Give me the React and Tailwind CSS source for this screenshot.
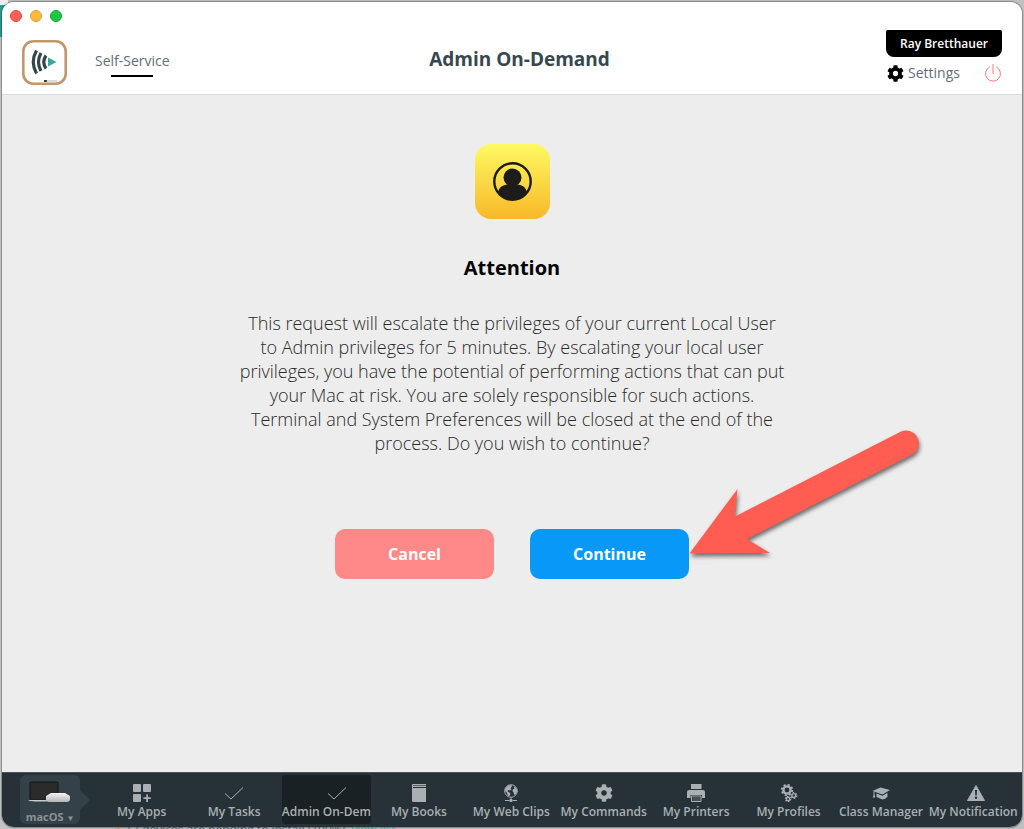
import {useState} from "react";
import {FaCog} from "react-icons/fa";

const AppsIcon = () => (
    <svg width="18" height="18" viewBox="0 0 18 18" fill="currentColor">
        <rect x="0" y="0" width="8" height="8" rx="1"/>
        <rect x="10" y="0" width="8" height="8" rx="1"/>
        <rect x="0" y="10" width="8" height="8" rx="1"/>
        <path d="M13.2 10.5h1.8v2.8h2.8v1.8H15v2.8h-1.8v-2.8h-2.8v-1.8h2.8z"/>
    </svg>
);

const CheckIcon = () => (
    <svg width="18" height="18" viewBox="0 0 18 18" fill="none" stroke="currentColor" strokeWidth="1">
        <path d="M0 9.500L6 15L18 3.500"/>
    </svg>
);

const BookIcon = () => (
    <svg width="16" height="18" viewBox="0 0 16 18" fill="currentColor">
        <path d="M1.500 0H15v1H2v1h13v1H2v1h13v14H2.500Q1 18 1 16.500V1.500Q1 .3 1.500 0z"/>
        <path d="M2 1h13v1H2z" opacity="0.4"/>
    </svg>
);

const GlobeIcon = () => (
    <svg width="16" height="18" viewBox="0 0 16 18" fill="none" stroke="currentColor">
        <circle cx="8" cy="7" r="6.300" strokeWidth="1"/>
        <path d="M2.200 4.500L5 1.500L8.500 1L9 2.500L7.500 4L8.500 5.500L6.500 6.500L5 6L4.500 7.500L6.500 8.500L7.500 10L6 12.800L4.500 11L4 8.800L2 7z" fill="currentColor" stroke="none"/>
        <path d="M10.500 2L13.500 4.200L14.300 7.500L12.500 10.500L11 10.800L10.600 8.500L9.500 7L10 5.200L11.500 4.500z" fill="currentColor" stroke="none"/>
        <path d="M8 13.500v2M2 16.500h4.500M9.500 16.500H14" strokeWidth="1"/>
        <rect x="6.500" y="15" width="3" height="3" rx="1" fill="currentColor" stroke="none"/>
    </svg>
);

const PrinterIcon = () => (
    <svg width="18" height="18" viewBox="0 0 18 18" fill="currentColor">
        <path d="M4 0h10.500v5H4z"/>
        <path d="M2 6h14q2 0 2 2v6h-3v-3H3.500v3H0V8q0-2 2-2z"/>
        <path d="M4.500 12h9.500v5.500H4.500z" fill="none" stroke="currentColor"/>
        <path d="M5.500 13.500H13v1H5.500zM5.500 15.500H13v1H5.500z" opacity="0.5"/>
    </svg>
);

const GearsIcon = () => (
    <svg width="18" height="18" viewBox="0 0 18 18" fill="none" stroke="currentColor">
        <circle cx="7" cy="6" r="3.600" strokeWidth="2.400"/>
        <circle cx="7" cy="6" r="5.300" strokeWidth="1.800" strokeDasharray="2.080 2.080"/>
        <circle cx="13.800" cy="11.500" r="1.900" strokeWidth="1.400"/>
        <circle cx="13.800" cy="11.500" r="3" strokeWidth="1.200" strokeDasharray="1.570 1.570"/>
        <circle cx="8" cy="15" r="1.700" strokeWidth="1.400"/>
        <circle cx="8" cy="15" r="2.700" strokeWidth="1.200" strokeDasharray="1.410 1.410"/>
    </svg>
);

const GraduationIcon = () => (
    <svg width="18" height="18" viewBox="0 0 18 18" fill="currentColor">
        <path d="M0.500 7L8.500 3.500L18 6L10.500 10.500z"/>
        <path d="M4.500 9.500L10.500 11.800L15.500 8.800v4q-2 2.500-5 2.700L4.500 13z"/>
        <path d="M1.500 7.500h1v3l.8 3H.8l.7-3z"/>
    </svg>
);

const WarningIcon = () => (
    <svg width="18" height="18" viewBox="0 0 18 18">
        <path d="M9 1.500L17.500 16.500H.500z" fill="currentColor" stroke="currentColor" strokeLinejoin="round"/>
        <path d="M7.900 6h2.200l-.4 5.500H8.300z" fill="#263238"/>
        <circle cx="9" cy="13.800" r="1.200" fill="#263238"/>
    </svg>
);

const PowerIcon = () => (
    <svg width="18" height="18" viewBox="0 0 18 18" fill="none" stroke="currentColor" strokeWidth="1" strokeLinecap="round">
        <path d="M9 0.500V9.500"/>
        <path d="M5.500 3A7.500 7.500 0 1 0 12.500 3"/>
    </svg>
);

const Logo = () => (
    <svg width="45" height="45" viewBox="0 0 45 45" fill="none">
        <rect x="1.300" y="1.300" width="42.400" height="42.400" rx="10" fill="#fff" stroke="#c1976b" strokeWidth="2.600"/>
        <g stroke="#33454e" strokeWidth="3.200">
            <path d="M14.500 10.500Q8 22 14.500 33.500"/>
            <path d="M19 13Q14 22 19 31"/>
            <path d="M24 15.500Q19.500 22 24 28.500"/>
        </g>
        <path d="M26 17.500L34.500 22L26 26.500z" fill="#35aa9b"/>
        <rect x="22" y="40" width="3" height="2" fill="#33454e"/>
        <rect x="25" y="40" width="10" height="2" fill="#dcdcdc"/>
    </svg>
);

const UserBadge = () => (
    <svg width="75" height="75" viewBox="0 0 75 75">
        <defs>
            <linearGradient id="badge" x1="0" y1="0" x2="0" y2="1">
                <stop offset="0" stopColor="#fefa62"/>
                <stop offset="1" stopColor="#f7b829"/>
            </linearGradient>
            <clipPath id="ring">
                <circle cx="37.500" cy="37.500" r="18.500"/>
            </clipPath>
        </defs>
        <rect width="75" height="75" rx="16" fill="url(#badge)"/>
        <circle cx="37.500" cy="37.500" r="18.200" fill="none" stroke="#1c1c1a" strokeWidth="2.400"/>
        <g fill="#1c1c1a" clipPath="url(#ring)">
            <circle cx="37.500" cy="33.500" r="9"/>
            <path d="M33 38h9v2.500c6 .5 9 3 10 8V56H23v-7.500c1-5 4-7.500 10-8z"/>
        </g>
    </svg>
);

const MacDevices = () => (
    <svg width="44" height="24" viewBox="0 0 44 24">
        <defs>
            <linearGradient id="mini" x1="0" y1="0" x2="0" y2="1">
                <stop offset="0" stopColor="#f4f4f4"/>
                <stop offset="1" stopColor="#b5b5b5"/>
            </linearGradient>
        </defs>
        <rect x="2" y="1" width="28" height="18" rx="1" fill="#2b2b2b" stroke="#151719"/>
        <path d="M0 19h22v1q-10 1-20 0z" fill="#c9cccd"/>
        <path d="M23 12h14l5 3v4q-1 2-3 2H21q-2 0-3-2v-4z" fill="url(#mini)"/>
    </svg>
);

const Arrow = () => (
    <svg width="250" height="150" viewBox="0 0 250 150" className="drop-shadow-[1px_3px_2px_rgba(0,0,0,0.55)]">
        <path
            d="M0.500 132.500L48.500 68L46 95.500L212 10.500A12.800 12.800 0 0 1 224 33L58 118L81 132z"
            fill="#ff5d52"
        />
    </svg>
);

const tabs = [
    {name: "My Apps", icon: <AppsIcon/>},
    {name: "My Tasks", icon: <CheckIcon/>},
    {name: "Admin On-Demand", icon: <CheckIcon/>},
    {name: "My Books", icon: <BookIcon/>},
    {name: "My Web Clips", icon: <GlobeIcon/>},
    {name: "My Commands", icon: <FaCog size={18}/>},
    {name: "My Printers", icon: <PrinterIcon/>},
    {name: "My Profiles", icon: <GearsIcon/>},
    {name: "Class Manager", icon: <GraduationIcon/>},
    {name: "My Notifications", icon: <WarningIcon/>},
];

const Header = () => (
    <header className="border-b border-[#dcdcdc] bg-white pb-[9px] pt-2">
        <div className="flex gap-2 px-2">
            <button aria-label="Close" className="h-3 w-3 rounded-full border border-[#e2463f] bg-[#fe5f57]"/>
            <button aria-label="Minimize" className="h-3 w-3 rounded-full border border-[#e1a032] bg-[#febb3e]"/>
            <button aria-label="Zoom" className="h-3 w-3 rounded-full border border-[#14a82e] bg-[#1ec840]"/>
        </div>
        <div className="flex items-start px-5 pt-2">
            <div className="flex w-[155px] items-start gap-7 pt-[10px]">
                <Logo/>
                <a href="#self-service" className="flex flex-col items-center gap-1 whitespace-nowrap pt-[11px] text-sm text-[#5f6d7c]">
                    Self-Service
                    <span className="h-[2px] w-[42px] bg-black"/>
                </a>
            </div>
            <h1 className="flex-1 pt-[15px] text-center text-[19px] leading-7 font-bold text-[#37474f]">Admin On-Demand</h1>
            <div className="flex w-[140px] flex-col items-end gap-[6px]">
                <div className="rounded-b-lg rounded-t-xs bg-black px-[14px] py-[6px] text-xs leading-[15px] font-semibold text-white">Ray Bretthauer</div>
                <div className="flex w-[115px] items-center justify-between">
                    <a href="#settings" className="flex items-center gap-1 text-sm text-[#5f6d7c]">
                        <FaCog size={17} className="text-black"/>
                        Settings
                    </a>
                    <button aria-label="Log out" className="text-[#fb7a7a]"><PowerIcon/></button>
                </div>
            </div>
        </div>
    </header>
);

const App = () => {
    const [active, setActive] = useState("Admin On-Demand");

    return <div className="flex h-screen flex-col overflow-hidden bg-[#bfc0c2] bg-[linear-gradient(#ececec_5px,#2f9c90_5px,#2f9c90_37px,#c4c4c6_37px)] bg-[length:8px_100%] bg-no-repeat px-[2px] pt-[2px] font-['Open_Sans',sans-serif]">
        <div className="flex flex-1 flex-col overflow-hidden rounded-xl bg-[#ededed] shadow-[0_0_1px_1px_rgba(0,0,0,0.3)]">
            <Header/>
            <main className="flex flex-1 flex-col items-center px-6 pt-[49px]">
                <UserBadge/>
                <h2 className="mt-[35px] text-xl font-bold text-black">Attention</h2>
                <p className="mt-[29px] max-w-[546px] text-center text-lg leading-6 font-light text-[#2a2a2a]">
                    This request will escalate the privileges of your current Local User to Admin privileges for 5
                    minutes. By escalating your local user privileges, you have the potential of performing actions
                    that can put your Mac at risk. You are solely responsible for such actions. Terminal and System
                    Preferences will be closed at the end of the process. Do you wish to continue?
                </p>
                <div className="mt-[74px] flex gap-9">
                    <button className="h-[50px] w-[159px] rounded-[10px] bg-[#ff8888] text-base font-bold text-white">Cancel</button>
                    <div className="relative">
                        <button className="h-[50px] w-[159px] rounded-[10px] bg-[#0898f8] text-base font-bold text-white">Continue</button>
                        <div className="pointer-events-none absolute bottom-2 left-full"><Arrow/></div>
                    </div>
                </div>
            </main>
            <nav className="flex h-[55px] border-t border-[#46545b] bg-[#263238] text-[#a9afb2]">
                <div className="relative ml-[18px] mr-[17px] mt-[2px] h-[49px] w-[60px] shrink-0 rounded-md bg-[#344149]">
                    <div className="absolute top-1/2 left-full -translate-y-1/2 border-y-[10px] border-l-[10px] border-y-transparent border-l-[#344149]"/>
                    <button className="flex w-full flex-col items-center gap-1 pt-[6px] text-[11px] leading-4 font-bold text-[#8b9397]">
                        <MacDevices/>
                        <span>macOS <span className="text-[8px]">▼</span></span>
                    </button>
                </div>
                <div className="flex min-w-0 flex-1 gap-[3px] pt-[2px] pr-1">
                    {tabs.map(tab => (
                        <button
                            key={tab.name}
                            onClick={() => setActive(tab.name)}
                            className={`flex h-[49px] min-w-0 flex-1 basis-0 items-start overflow-hidden rounded-[3px] ${active === tab.name ? "bg-[#192124]" : ""}`}
                        >
                            <span className="flex w-max min-w-full shrink-0 flex-col items-center gap-[2px] pt-[9px] text-xs leading-4 font-semibold">
                                {tab.icon}
                                {tab.name}
                            </span>
                        </button>
                    ))}
                </div>
            </nav>
        </div>
        <footer className="h-[2px] shrink-0 overflow-hidden pl-[113px] text-xs leading-[6px] whitespace-nowrap text-[#44525c]">
            <span className="text-[#f28c28]">●</span> 17 devices are pending to install (100%). <a href="#list" className="text-[#2f9c90]">view list</a>
        </footer>
    </div>
}
export default App;
